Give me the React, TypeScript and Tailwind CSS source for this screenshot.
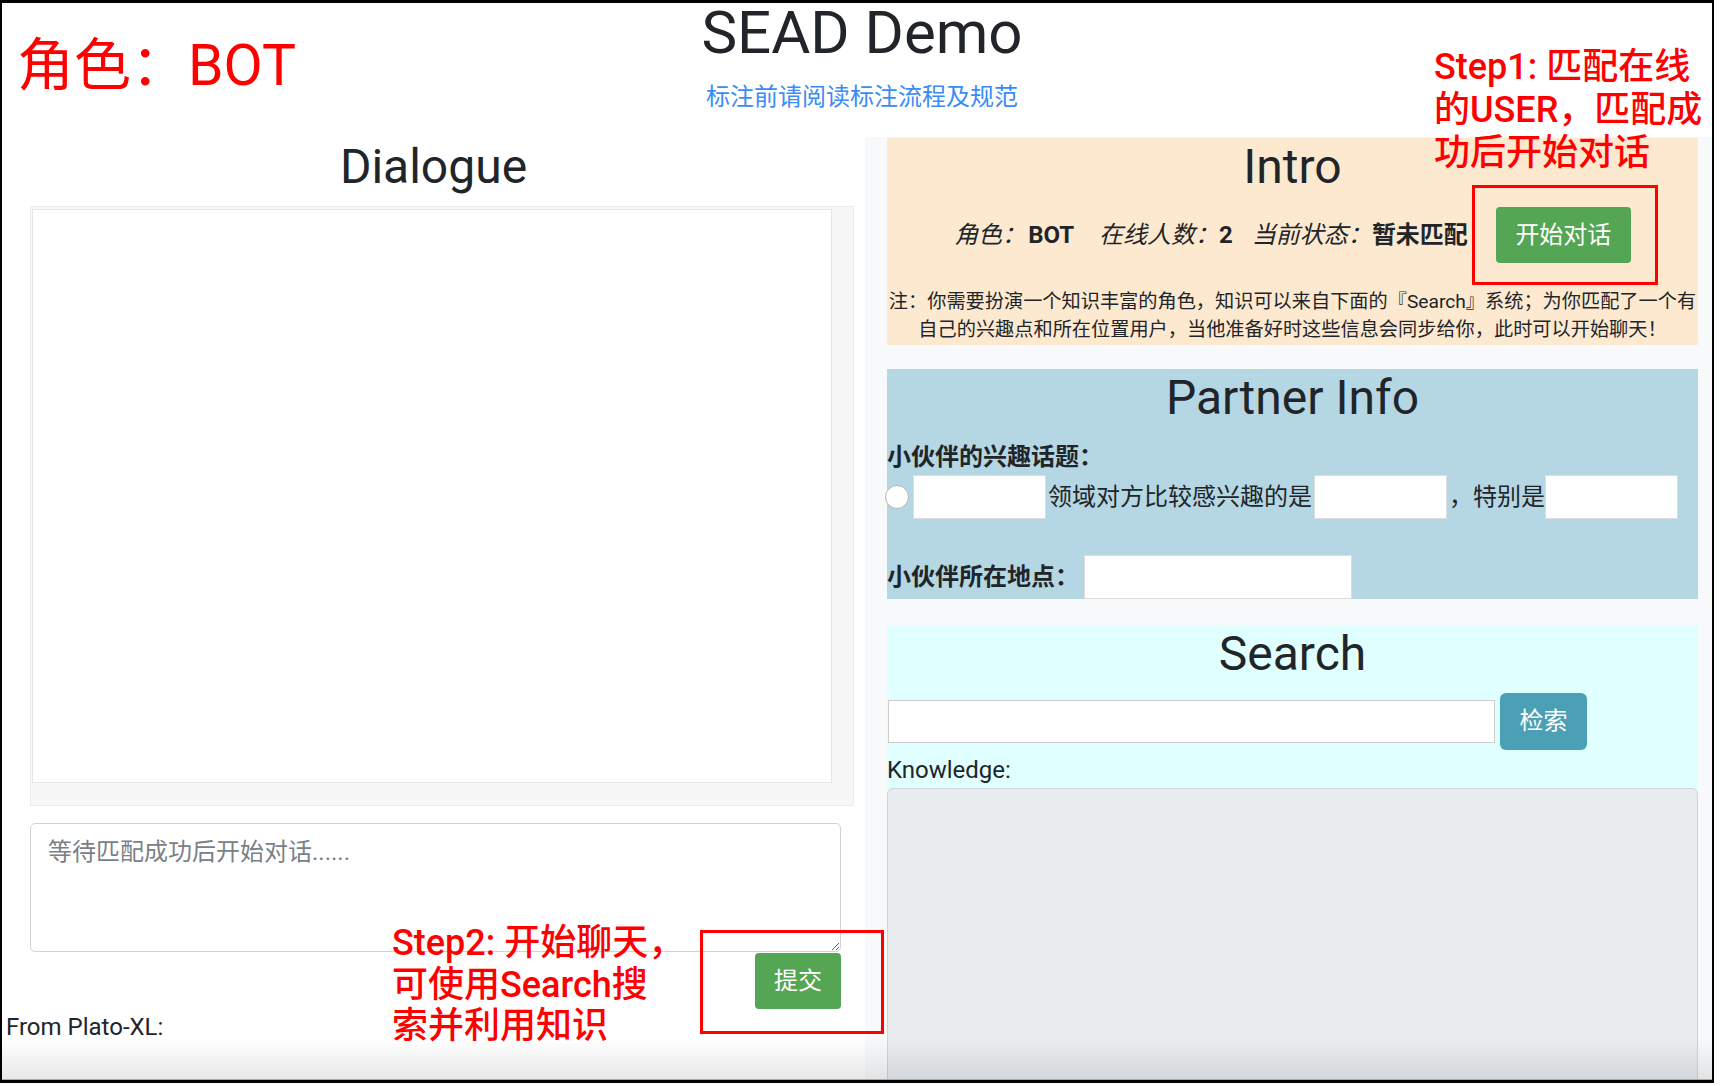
import React from "react";

function TextBox({ className = "" }: { className?: string }) {
  return (
    <input
      type="text"
      className={`h-[44px] bg-white border border-[#dcdcdc] outline-none ${className}`}
    />
  );
}

function IntroPanel() {
  return (
    <div className="h-[207px] shrink-0 bg-[#fde9d0]">
      <h2 className="text-center text-[48px] leading-[57.6px] font-normal">Intro</h2>
      <div className="mt-[11px] h-[56px] flex items-center justify-center text-[24px]">
        <span className="italic">角色：</span>
        <b className="ml-[2px]">BOT</b>
        <span className="italic ml-[25px]">在线人数：</span>
        <b>2</b>
        <span className="italic ml-[19px]">当前状态：</span>
        <b>暂未匹配</b>
        <button className="ml-[28px] h-[56px] w-[135px] rounded-[4px] bg-[#54a554] text-white text-[24px]">
          开始对话
        </button>
      </div>
      <p className="mt-[25px] text-center text-[19.2px] leading-[28.8px]">
        <span className="block whitespace-nowrap">
          注：你需要扮演一个知识丰富的角色，知识可以来自下面的『Search』系统；为你匹配了一个有
        </span>
        <span className="block whitespace-nowrap">
          自己的兴趣点和所在位置用户，当他准备好时这些信息会同步给你，此时可以开始聊天！
        </span>
      </p>
    </div>
  );
}

function PartnerPanel() {
  return (
    <div className="mt-[24px] h-[230px] shrink-0 bg-[#b5d6e3]">
      <h2 className="text-center text-[48px] leading-[57.6px] font-normal">Partner Info</h2>
      <div className="mt-[12px] text-[24px] leading-[36px] font-bold">小伙伴的兴趣话题：</div>
      <div className="h-[45px] flex items-center text-[24px] leading-[36px]">
        <input
          type="radio"
          className="appearance-none -ml-[2px] w-[24px] h-[24px] rounded-full bg-white border border-[#b4b4b4]"
        />
        <TextBox className="ml-[4px] w-[133px]" />
        <span className="ml-[2px]">领域对方比较感兴趣的是</span>
        <TextBox className="ml-[2px] w-[133px]" />
        <span className="ml-[2px]">，特别是</span>
        <TextBox className="w-[133px]" />
      </div>
      <div className="mt-[35px] h-[44px] flex items-center text-[24px] leading-[36px]">
        <span className="font-bold">小伙伴所在地点：</span>
        <TextBox className="ml-[5px] w-[268px]" />
      </div>
    </div>
  );
}

function SearchPanel() {
  return (
    <div className="mt-[26px] flex-1 min-h-0 overflow-hidden bg-[#e0ffff]">
      <h2 className="text-center text-[48px] leading-[57.6px] font-normal">Search</h2>
      <div className="mt-[10px] h-[57px] flex items-center">
        <input
          type="text"
          className="ml-[1px] w-[607px] h-[43px] bg-white border border-[#cccccc] outline-none"
        />
        <button className="ml-[5px] w-[87px] h-[57px] rounded-[6px] bg-[#4ca0b5] text-white text-[24px]">
          检索
        </button>
      </div>
      <div className="mt-[2px] text-[24px] leading-[36px]">Knowledge:</div>
      <div className="h-[320px] bg-[#e9ecef] border border-[#ced4da] rounded-t-[6px]" />
    </div>
  );
}

export default function App() {
  return (
    <div className="w-[1734px] h-[1086px] bg-white overflow-hidden font-['Roboto','Noto_Sans_CJK_SC',sans-serif] text-[#212529]">
      <div className="relative w-[1714px] h-[1083px] border-l-2 border-r-2 border-t-[3px] border-b-[3px] border-black overflow-hidden">
        <div className="w-[1720px] h-full flex flex-col">
          <header className="h-[134px] shrink-0 flex flex-col items-center">
            <h1 className="text-[60px] leading-[60px] font-normal">SEAD Demo</h1>
            <a className="mt-[16px] text-[24px] leading-[36px] text-[#3a8bf5]">标注前请阅读标注流程及规范</a>
          </header>

          <div className="flex flex-1 min-h-0">
            <section className="w-[863px] shrink-0 pt-[1px] bg-white">
              <h2 className="text-center text-[48px] leading-[57.6px] font-normal">Dialogue</h2>
              <div className="ml-[28px] mt-[10px] w-[824px] h-[600px] bg-[#f7f7f7] border border-[#ececec] pt-[2px] pl-[1px] pr-[21px] pb-[22px]">
                <div className="h-full bg-white border border-[#e6e6e6]" />
              </div>
              <div className="ml-[28px] w-[811px] flex flex-col">
                <textarea
                  placeholder="等待匹配成功后开始对话......"
                  className="mt-[17px] h-[129px] w-full rounded-[5px] border border-[#ced4da] px-[17px] pt-[11px] text-[24px] leading-[34px] outline-none placeholder:text-[#7b8086]"
                />
                <button className="mt-[1px] self-end w-[86px] h-[56px] rounded-[4px] bg-[#54a554] text-white text-[24px]">
                  提交
                </button>
              </div>
              <div className="pl-[4px] text-[24px] leading-[36px]">From Plato-XL:</div>
            </section>

            <section className="flex-1 flex flex-col bg-[#f8f9fa] pl-[22px] pr-[24px] pt-[1px]">
              <IntroPanel />
              <PartnerPanel />
              <SearchPanel />
            </section>
          </div>
        </div>

        {/* annotations drawn over the page */}
        <div className="absolute left-[15px] top-[34px] text-[57px] leading-[57px] text-[#ff0000] whitespace-nowrap">
          角色：BOT
        </div>
        <div className="absolute left-[1432px] top-[43px] text-[36px] leading-[43px] font-medium text-[#ff0000] whitespace-nowrap">
          Step1: 匹配在线
          <br />
          的USER，匹配成
          <br />
          功后开始对话
        </div>
        <div className="absolute left-[1470px] top-[182px] w-[186px] h-[100px] border-[3px] border-[#ff0000]" />
        <div className="absolute left-[390px] top-[920px] text-[36px] leading-[41.5px] font-medium text-[#ff0000] whitespace-nowrap">
          Step2: 开始聊天，
          <br />
          可使用Search搜
          <br />
          索并利用知识
        </div>
        <div className="absolute left-[698px] top-[927px] w-[184px] h-[104px] border-[3px] border-[#ff0000]" />

        <div className="pointer-events-none absolute left-0 right-0 bottom-0 h-[42px] bg-linear-to-b from-[rgba(0,0,0,0)] to-[rgba(0,0,0,0.09)] border-b border-[#a9a9a9]" />
      </div>
    </div>
  );
}
